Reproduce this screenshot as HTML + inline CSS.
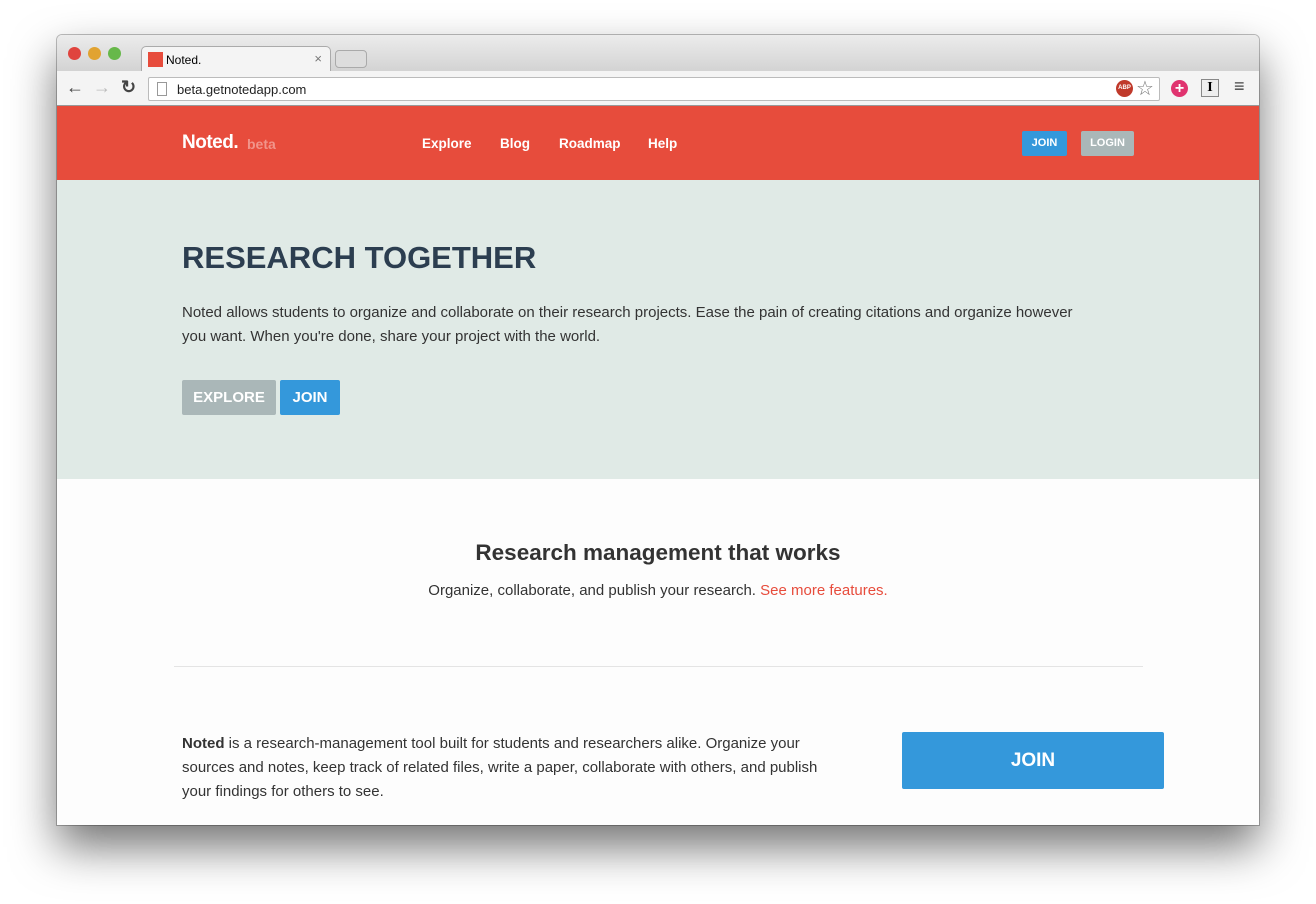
<!DOCTYPE html>
<html><head><meta charset="utf-8"><style>
*{margin:0;padding:0;box-sizing:border-box}
body{width:1316px;height:904px;background:#fff;font-family:"Liberation Sans",sans-serif;position:relative;overflow:hidden}
.win{position:absolute;left:57px;top:35px;width:1202px;height:790px;border-radius:5px 5px 0 0;box-shadow:0 22px 45px rgba(0,0,0,.55),0 0 0 1px rgba(0,0,0,.25);overflow:hidden;background:#fdfdfd}
.title{position:absolute;left:0;top:0;width:100%;height:36px;background:linear-gradient(#ececec,#d3d3d3)}
.dot{position:absolute;top:12px;width:13px;height:13px;border-radius:50%}
.tab{position:absolute;left:84px;top:11px;width:190px;height:26px;background:#f4f4f4;border:1px solid #aaa;border-bottom:none;border-radius:5px 5px 0 0}
.tool{position:absolute;left:0;top:36px;width:100%;height:35px;background:#f4f4f4;border-bottom:1px solid #999}
.url{position:absolute;left:91px;top:6px;width:1012px;height:24px;background:#fff;border:1px solid #bbb;border-radius:2px;font-size:13px;padding:4px 0 0 28px;color:#222}
.hdr{position:absolute;left:0;top:71px;width:100%;height:74px;background:#e74c3c;color:#fff}
.hdr a{position:absolute;top:30px;font-size:13.5px;font-weight:bold}
.hero{position:absolute;left:0;top:145px;width:100%;height:299px;background:#e0eae6}
.btn{position:absolute;color:#fff;font-weight:bold;border-radius:2px;text-align:center}
</style></head><body>
<div class="win">
<div class="title">
<div class="dot" style="left:11px;background:#e0443e"></div>
<div class="dot" style="left:31px;background:#e1a331"></div>
<div class="dot" style="left:51px;background:#67b84a"></div>
<div class="tab"><div style="position:absolute;left:6px;top:5px;width:15px;height:15px;background:#e74c3c"></div><span style="position:absolute;left:24px;top:6px;font-size:12px">Noted.</span><span style="position:absolute;right:8px;top:4px;font-size:13px;color:#777">×</span></div>
<div style="position:absolute;left:278px;top:15px;width:32px;height:18px;background:#ddd;border:1px solid #aaa;border-radius:4px"></div>
</div>
<div class="tool">
<span style="position:absolute;left:9px;top:6px;font-size:18px;color:#444">←</span>
<span style="position:absolute;left:36px;top:6px;font-size:18px;color:#bbb">→</span>
<span style="position:absolute;left:64px;top:6px;font-size:18px;color:#444;font-weight:bold">↻</span>
<div class="url">beta.getnotedapp.com</div>
<div style="position:absolute;left:100px;top:11px;width:10px;height:14px;border:1px solid #999"></div>
<div style="position:absolute;left:1059px;top:9px;width:17px;height:17px;border-radius:50%;background:#c0392b;color:#fff;font-size:6px;font-weight:bold;text-align:center;line-height:17px">ABP</div>
<span style="position:absolute;left:1079px;top:5px;font-size:20px;color:#777">☆</span>
<div style="position:absolute;left:1114px;top:9px;width:17px;height:17px;border-radius:50%;background:#e0336f;color:#fff;font-size:16px;font-weight:bold;text-align:center;line-height:17px">+</div>
<div style="position:absolute;left:1144px;top:8px;width:18px;height:18px;border:1px solid #888;background:#eee;font-size:14px;text-align:center;font-family:'Liberation Serif';font-weight:bold">I</div>
<span style="position:absolute;left:1177px;top:5px;font-size:18px;color:#444">≡</span>
</div>
<div class="hdr">
<span style="position:absolute;left:125px;top:26px;font-size:19px;font-weight:bold;letter-spacing:-.5px">Noted.</span>
<span style="position:absolute;left:190px;top:30px;font-size:14px;font-weight:bold;color:#f1948a">beta</span>
<a style="left:365px">Explore</a><a style="left:443px">Blog</a><a style="left:502px">Roadmap</a><a style="left:591px">Help</a>
<div class="btn" style="left:965px;top:25px;width:45px;height:25px;background:#3498db;font-size:11px;line-height:25px">JOIN</div>
<div class="btn" style="left:1024px;top:25px;width:53px;height:25px;background:#aab7b8;font-size:11px;line-height:25px">LOGIN</div>
</div>
<div class="hero">
<div style="position:absolute;left:125px;top:60px;font-size:31px;font-weight:bold;color:#2c3e50">RESEARCH TOGETHER</div>
<div style="position:absolute;left:125px;top:121px;width:905px;font-size:15px;line-height:24px;color:#333">Noted allows students to organize and collaborate on their research projects. Ease the pain of creating citations and organize however you want. When you're done, share your project with the world.</div>
<div class="btn" style="left:125px;top:200px;width:94px;height:35px;background:#aab7b8;font-size:15px;line-height:35px">EXPLORE</div>
<div class="btn" style="left:223px;top:200px;width:60px;height:35px;background:#3498db;font-size:15px;line-height:35px">JOIN</div>
</div>
<div style="position:absolute;left:0;top:505px;width:100%;text-align:center;font-size:22.5px;font-weight:bold;color:#333">Research management that works</div>
<div style="position:absolute;left:0;top:547px;width:100%;text-align:center;font-size:15px;color:#333">Organize, collaborate, and publish your research. <span style="color:#e74c3c">See more features.</span></div>
<div style="position:absolute;left:117px;top:631px;width:969px;height:1px;background:#e4e4e4"></div>
<div style="position:absolute;left:125px;top:697px;width:660px;font-size:15px;line-height:24px;color:#333"><b>Noted</b> is a research-management tool built for students and researchers alike. Organize your sources and notes, keep track of related files, write a paper, collaborate with others, and publish your findings for others to see.</div>
<div class="btn" style="left:845px;top:697px;width:262px;height:57px;background:#3498db;font-size:19px;line-height:57px">JOIN</div>
</div>
</body></html>
